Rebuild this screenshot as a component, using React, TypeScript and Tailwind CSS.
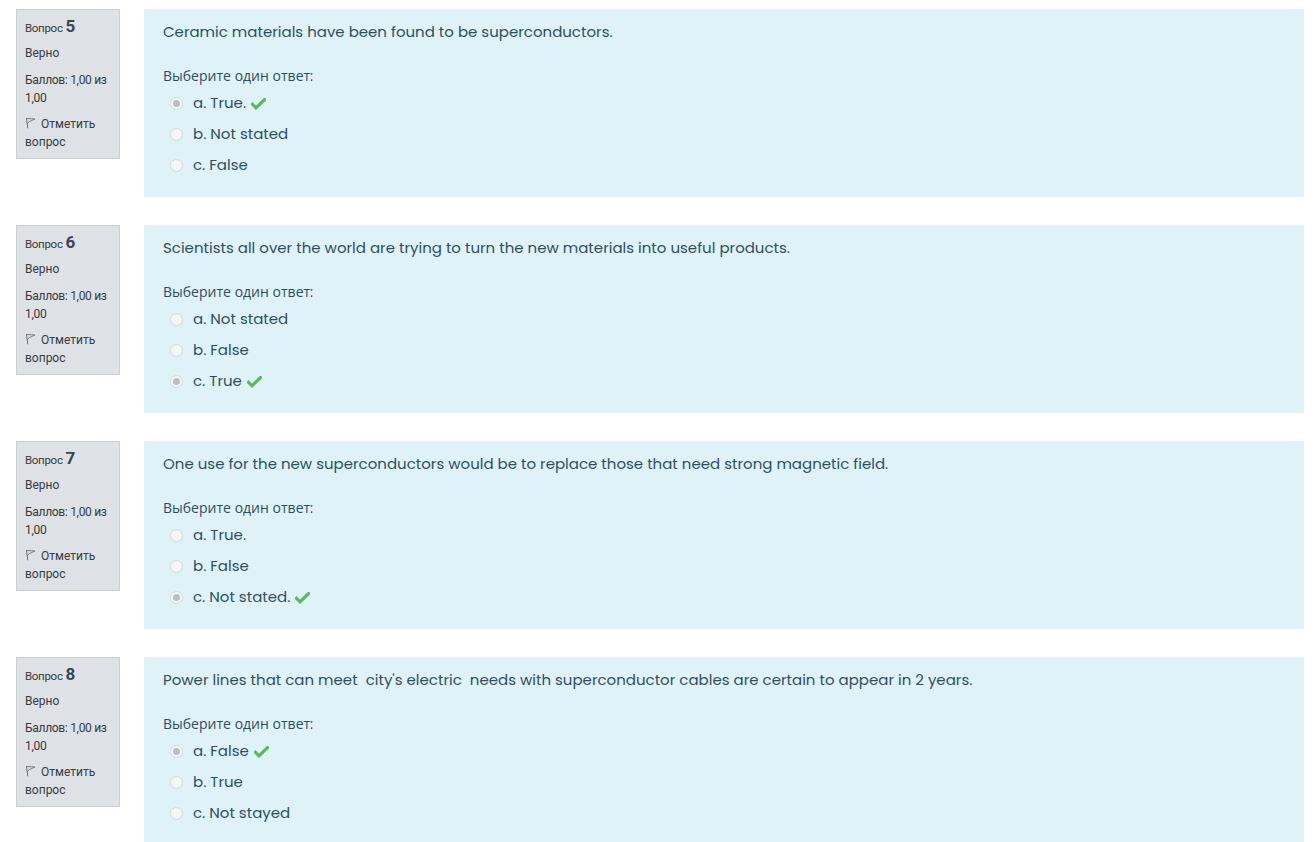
import React from "react";

type Question = {
  num: number;
  text: string;
  options: { label: string; checked?: boolean }[];
};

const questions: Question[] = [
  {
    num: 5,
    text: "Ceramic materials have been found to be superconductors.",
    options: [
      { label: "a. True.", checked: true },
      { label: "b. Not stated" },
      { label: "c. False" },
    ],
  },
  {
    num: 6,
    text: "Scientists all over the world are trying to turn the new materials into useful products.",
    options: [
      { label: "a. Not stated" },
      { label: "b. False" },
      { label: "c. True", checked: true },
    ],
  },
  {
    num: 7,
    text: "One use for the new superconductors would be to replace those that need strong magnetic field.",
    options: [
      { label: "a. True." },
      { label: "b. False" },
      { label: "c. Not stated.", checked: true },
    ],
  },
  {
    num: 8,
    text: "Power lines that can meet  city's electric  needs with superconductor cables are certain to appear in 2 years.",
    options: [
      { label: "a. False", checked: true },
      { label: "b. True" },
      { label: "c. Not stayed" },
    ],
  },
];

function FlagIcon() {
  return (
    <svg width="11" height="12" viewBox="0 0 11 12" fill="none" className="inline-block mr-[5px] -mt-[3px]">
      <path d="M1.5 1.5 L2.8 11" stroke="#6a737b" strokeWidth="1" strokeLinecap="round" />
      <path d="M1.5 1.5 L10 2 L4.5 4.5 L2.2 6.5" stroke="#6a737b" strokeWidth="0.9" strokeLinejoin="round" />
    </svg>
  );
}

function Check() {
  return (
    <svg width="15" height="12" viewBox="0 0 15 12" className="ml-[5px]">
      <path d="M1.5 6.3 L5 9.8 L13.5 1.6" stroke="#5cb85c" strokeWidth="3.2" fill="none" strokeLinecap="square" strokeLinejoin="miter" />
    </svg>
  );
}

function Radio({ checked }: { checked?: boolean }) {
  return (
    <span className="w-[13px] h-[13px] rounded-full border border-[#d4d8dc] bg-[#f4f6f7] flex items-center justify-center mr-[10px]">
      {checked && <span className="w-[7px] h-[7px] rounded-full bg-[#b9bec3]" />}
    </span>
  );
}

function QuestionBlock({ q }: { q: Question }) {
  return (
    <div className="flex gap-6 items-start">
      <div
        className="w-[104px] bg-[#dee2e6] border border-[#cbd0d5] px-2 pt-[7px] pb-[7px] text-[12px] leading-[18px] text-[#373a3c] shrink-0"
        style={{ fontFamily: "Roboto, sans-serif" }}
      >
        <div className="flex items-baseline gap-[3px]">
          <span className="text-[11.5px] tracking-[-0.3px]">Вопрос</span>
          <span className="text-[17px] font-bold text-[#3a4550]">{q.num}</span>
        </div>
        <div className="mt-[7px]">Верно</div>
        <div className="mt-[9px] tracking-[-0.3px]">Баллов: 1,00 из 1,00</div>
        <div className="mt-[8px]">
          <FlagIcon />
          Отметить вопрос
        </div>
      </div>
      <div
        className="flex-1 h-[188px] bg-[#def2f8] pl-[19px] pt-[12px] text-[#2f4f5f]"
        style={{ fontFamily: "Poppins, 'Open Sans', sans-serif" }}
      >
        <p className="text-[15px] leading-[22px] whitespace-pre-wrap">{q.text}</p>
        <p className="mt-[22px] text-[14px] leading-[22px]">Выберите один ответ:</p>
        <div className="pl-[7px] pt-[1px]">
          {q.options.map((o, i) => (
            <div key={i} className="h-[31px] flex items-center text-[15px]">
              <Radio checked={o.checked} />
              <span>{o.label}</span>
              {o.checked && <Check />}
            </div>
          ))}
        </div>
      </div>
    </div>
  );
}

export default function App() {
  return (
    <div className="bg-white min-h-[842px] pl-4 pr-[10px] pt-[9px] flex flex-col gap-[28px]">
      {questions.map((q) => (
        <QuestionBlock key={q.num} q={q} />
      ))}
    </div>
  );
}
